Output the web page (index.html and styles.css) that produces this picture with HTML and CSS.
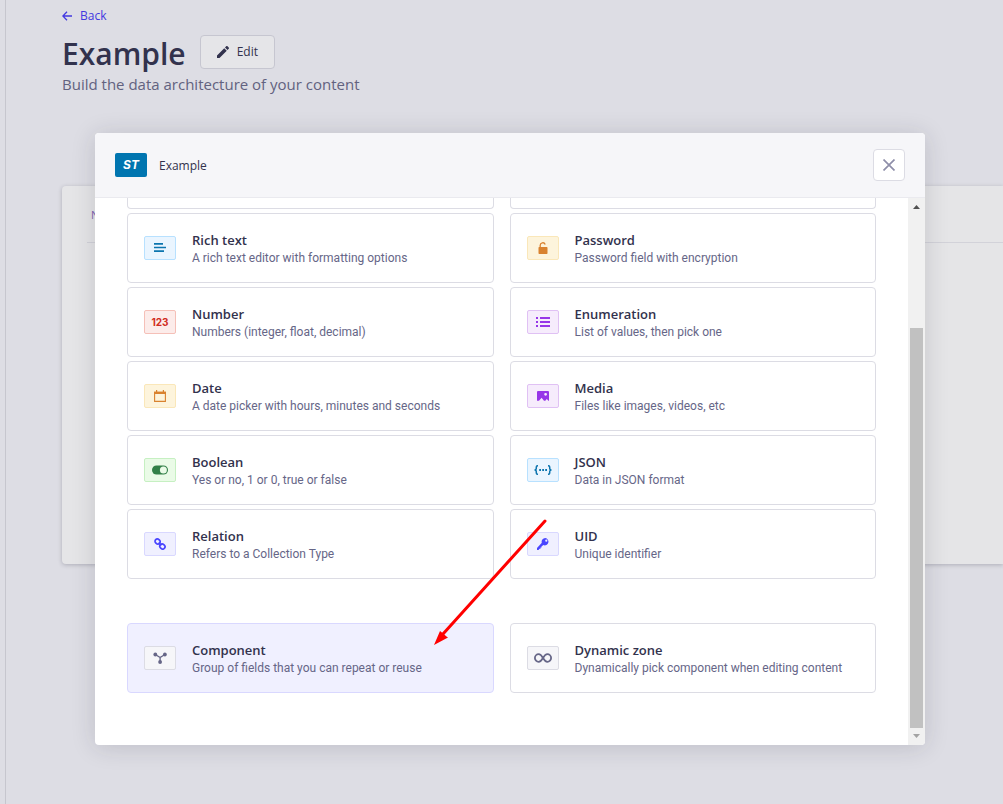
FILE: index.html
```html
<!DOCTYPE html>
<html lang="en">
<head>
<meta charset="utf-8">
<meta name="viewport" content="width=device-width, initial-scale=1">
<title>Content-Type Builder</title>
<link rel="stylesheet" href="styles.css">
</head>
<body>
<div class="page">
  <div class="side-edge"></div>
  <main class="content">
    <a class="back" href="#">
      <svg width="10" height="10" viewBox="0 0 10 10" fill="none" stroke="currentColor" stroke-width="1.3"><path d="M10 5H1M5 .7.8 5 5 9.300"/></svg>
      Back
    </a>
    <div class="title-row">
      <h1 class="title">Example</h1>
      <button class="edit" type="button">
        <svg width="12" height="12" viewBox="0 0 24 24" fill="currentColor"><path d="M0 19v5h5L19.500 9.500l-5-5zM23.400 5.600c.8-.8.8-1.800 0-2.600L21 .6c-.8-.8-1.800-.8-2.600 0L16 3l5 5z"/></svg>
        Edit
      </button>
    </div>
    <p class="subtitle">Build the data architecture of your content</p>
    <section class="panel">
      <div class="panel-head">N</div>
    </section>
  </main>
</div>

<div class="overlay">
  <div class="modal" role="dialog" aria-modal="true" aria-labelledby="dialog-title">
    <header class="modal-head">
      <span class="badge">ST</span>
      <h2 class="modal-title" id="dialog-title">Example</h2>
      <button class="close" type="button" aria-label="Close">
        <svg width="12" height="12" viewBox="0 0 12 12" fill="none" stroke="currentColor" stroke-width="1.700"><path d="M.5.5l11 11M11.500.5l-11 11"/></svg>
      </button>
    </header>
    <div class="modal-body">
      <div class="fields">
        <div class="grid">
          <div class="card-end"></div>
          <div class="card-end"></div>
          <button class="card" type="button">
            <span class="icon blue"><svg width="12" height="10" viewBox="0 0 12 10" fill="currentColor"><path d="M0 0h9v1.700H0zM0 3.700h12v1.600H0zM0 7.200h10v1.800H0z"/></svg></span>
            <span class="text"><span class="name">Rich text</span><span class="desc">A rich text editor with formatting options</span></span>
          </button>
          <button class="card" type="button">
            <span class="icon amber"><svg width="10" height="12" viewBox="0 0 10 12"><path d="M2.200 5V3.300a2.600 2.600 0 0 1 5-.9" fill="none" stroke="currentColor" stroke-width="1.300"/><rect x=".5" y="5" width="9" height="7" rx=".8" fill="currentColor"/></svg></span>
            <span class="text"><span class="name">Password</span><span class="desc">Password field with encryption</span></span>
          </button>
          <button class="card" type="button">
            <span class="icon red digits">123</span>
            <span class="text"><span class="name">Number</span><span class="desc">Numbers (integer, float, decimal)</span></span>
          </button>
          <button class="card" type="button">
            <span class="icon purple"><svg width="14" height="12" viewBox="0 0 14 12" fill="currentColor"><path d="M0 1h2v2H0zM4 1h10v2H4zM0 5h2v2H0zM4 5h10v2H4zM0 9h2v2H0zM4 9h10v2H4z"/></svg></span>
            <span class="text"><span class="name">Enumeration</span><span class="desc">List of values, then pick one</span></span>
          </button>
          <button class="card" type="button">
            <span class="icon amber"><svg width="12" height="12" viewBox="0 0 12 12"><path d="M.6 2.300h10.800v9.100H.6z" fill="none" stroke="currentColor" stroke-width="1.100"/><path d="M0 1.700h12V4H0zM2 0h1.200v2H2zM8.800 0H10v2H8.800z" fill="currentColor"/></svg></span>
            <span class="text"><span class="name">Date</span><span class="desc">A date picker with hours, minutes and seconds</span></span>
          </button>
          <button class="card" type="button">
            <span class="icon purple"><svg width="12" height="12" viewBox="0 0 12 12" fill="currentColor"><path fill-rule="evenodd" d="M1.200 1h9.600c.7 0 1.200.5 1.200 1.200v8.600h-.6L9.800 9 8.300 10.800H7L4.600 7.800 2 10.800H0V2.200C0 1.500.5 1 1.200 1zm7.400 1.900a1.400 1.400 0 1 0 0 2.800 1.400 1.400 0 0 0 0-2.800z"/></svg></span>
            <span class="text"><span class="name">Media</span><span class="desc">Files like images, videos, etc</span></span>
          </button>
          <button class="card" type="button">
            <span class="icon green"><svg width="16" height="10" viewBox="0 0 16 10"><rect y=".5" width="16" height="9" rx="4.500" fill="currentColor"/><circle cx="11.400" cy="5" r="3.500" fill="#eafbe7"/></svg></span>
            <span class="text"><span class="name">Boolean</span><span class="desc">Yes or no, 1 or 0, true or false</span></span>
          </button>
          <button class="card" type="button">
            <span class="icon blue"><svg width="18" height="10" viewBox="0 0 18 10" fill="none" stroke="currentColor" stroke-width="1.500"><path d="M4 .8H3.500C2.500.8 2.300 1.300 2.300 2v1.300C2.300 4.300 1.700 5 .5 5c1.200 0 1.800.7 1.800 1.700V8c0 .7.2 1.200 1.200 1.200H4M14 .8h.5c1 0 1.200.5 1.200 1.200v1.300c0 1 .6 1.700 1.800 1.700-1.200 0-1.800.7-1.800 1.700V8c0 .7-.2 1.200-1.200 1.200H14"/><path d="M5.200 5h1.800M8.200 5H10M11.200 5H13" stroke-width="2"/></svg></span>
            <span class="text"><span class="name">JSON</span><span class="desc">Data in JSON format</span></span>
          </button>
          <button class="card" type="button">
            <span class="icon indigo"><svg width="12" height="12" viewBox="0 0 12 12" fill="none" stroke="currentColor" stroke-width="1.700"><rect x=".9" y="1.200" width="5.400" height="4.600" rx="2.300" transform="rotate(45 3.600 3.500)"/><rect x="5.700" y="6.200" width="5.400" height="4.600" rx="2.300" transform="rotate(45 8.400 8.500)"/><path d="M4.600 4.600l2.800 2.800"/></svg></span>
            <span class="text"><span class="name">Relation</span><span class="desc">Refers to a Collection Type</span></span>
          </button>
          <button class="card" type="button">
            <span class="icon indigo"><svg width="12" height="12" viewBox="0 0 12 12" fill="currentColor"><path fill-rule="evenodd" d="M8.300 0a3.700 3.700 0 0 0-3.500 4.800L0 10v2h1.500l1-1.200h1V9.600h1V8.500l1.900-1.400A3.700 3.700 0 1 0 8.300 0zm1 1.600a1.100 1.100 0 1 1 0 2.200 1.100 1.100 0 0 1 0-2.200z"/></svg></span>
            <span class="text"><span class="name">UID</span><span class="desc">Unique identifier</span></span>
          </button>
        </div>
        <div class="grid">
          <button class="card selected" type="button">
            <span class="icon gray"><svg width="14" height="12" viewBox="0 0 14 12" fill="currentColor"><circle cx="2.300" cy="2.500" r="1.900"/><circle cx="11.900" cy="2.500" r="1.900"/><circle cx="7.100" cy="10" r="1.900"/><path d="M2.300 2.500l4.800 3 4.800-3M7.100 5v5" fill="none" stroke="currentColor" stroke-width="1.400"/></svg></span>
            <span class="text"><span class="name">Component</span><span class="desc">Group of fields that you can repeat or reuse</span></span>
          </button>
          <button class="card" type="button">
            <span class="icon gray"><svg width="18" height="10" viewBox="0 0 18 10" fill="none" stroke="currentColor" stroke-width="1.800"><path d="M9 5C7.500 2.500 6.500 1.200 4.700 1.200a3.800 3.800 0 0 0 0 7.600C6.500 8.800 7.500 7.500 9 5s2.500-3.800 4.300-3.800a3.800 3.800 0 0 1 0 7.600C11.500 8.800 10.500 7.500 9 5z"/></svg></span>
            <span class="text"><span class="name">Dynamic zone</span><span class="desc">Dynamically pick component when editing content</span></span>
          </button>
        </div>
        <svg class="pointer" width="114" height="128" viewBox="0 0 114 128" aria-hidden="true"><path d="M112 2L10 115" stroke="#f00" stroke-width="3" stroke-linecap="round"/><path d="M1 126l6-14 2.500 2 4 3.500 1.500 1z" fill="#f00"/></svg>
      </div>
      <div class="scrollbar" aria-hidden="true">
        <svg width="17" height="17" viewBox="0 0 17 17"><path d="M5 11h7L8.500 7z" fill="#505050"/></svg>
        <div class="track"><div class="thumb"></div></div>
        <svg width="17" height="17" viewBox="0 0 17 17"><path d="M5 6h7l-3.500 4z" fill="#a3a3a3"/></svg>
      </div>
    </div>
  </div>
</div>
</body>
</html>
```
FILE: styles.css
```css
* { box-sizing: border-box; }

body {
  margin: 0;
  background: #dddde4;
  color: #32324d;
  font-family: "Open Sans", "Noto Sans", sans-serif;
  font-size: 12px;
  line-height: 16px;
}

h1, h2, p { margin: 0; }
svg { display: block; flex: none; }
button { font: inherit; color: inherit; cursor: pointer; }

.page { display: flex; height: 100vh; overflow: hidden; }
.side-edge { flex: none; width: 6px; border-right: 1px solid #c6c6ce; }
.content { flex: 1; min-width: 0; padding: 8px 0 0 56px; }

.back {
  display: flex;
  align-items: center;
  gap: 8px;
  width: fit-content;
  color: #4338e0;
  text-decoration: none;
}

.title-row { display: flex; align-items: center; gap: 14px; margin-top: 6px; }
.title { padding-top: 4px; font-size: 30px; line-height: 40px; font-weight: 600; }
.edit {
  display: flex;
  align-items: center;
  gap: 8px;
  height: 34px;
  padding: 0 16px;
  border: 1px solid #c6c6d0;
  border-radius: 4px;
  background: #e5e5e8;
}
.subtitle { font-size: 15px; line-height: 20px; color: #62627f; }

.panel {
  height: 378px;
  margin-top: 92px;
  padding-left: 25px;
  border-radius: 4px 0 0 4px;
  background: #e5e5e7;
  box-shadow: 0 1px 4px rgba(33, 33, 52, 0.25);
}
.panel-head {
  height: 57px;
  padding: 21px 4px 0;
  border-bottom: 1px solid #d2d2d9;
  color: #7d5fb0;
  font-size: 11px;
}

.overlay {
  position: absolute;
  inset: 0;
  display: flex;
  padding: 133px 78px 59px 95px;
}
.modal {
  flex: 1;
  min-width: 0;
  display: flex;
  flex-direction: column;
  overflow: hidden;
  border-radius: 4px;
  background: #fff;
  box-shadow: 0 2px 24px rgba(33, 33, 52, 0.16);
}
.modal-head {
  display: flex;
  align-items: center;
  gap: 12px;
  padding: 16px 20px;
  border-bottom: 1px solid #eaeaef;
  background: #f6f6f9;
}
.badge {
  width: 32px;
  border-radius: 2px;
  background: #0075b0;
  color: #fff;
  font: italic 700 12px/24px Inter, sans-serif;
  text-align: center;
}
.modal-title { flex: 1; padding-top: 2px; font-size: 12px; font-weight: 500; }
.close {
  display: grid;
  place-items: center;
  width: 32px;
  height: 32px;
  padding: 0;
  border: 1px solid #dcdce4;
  border-radius: 4px;
  background: #fff;
  color: #8e8ea9;
}

.modal-body { flex: 1; min-height: 0; display: flex; }
.fields {
  position: relative;
  flex: 1;
  min-width: 0;
  display: flex;
  flex-direction: column;
  justify-content: flex-end;
  gap: 44px;
  padding: 0 32px 52px;
  overflow: hidden;
}
.grid {
  display: grid;
  grid-template-columns: 1fr 1fr;
  gap: 4px 16px;
}
.card, .card-end {
  border: 1px solid #dcdce4;
  border-radius: 4px;
  background: #fff;
}
.card-end { height: 11px; border-top: 0; border-radius: 0 0 4px 4px; }
.card {
  display: flex;
  align-items: center;
  gap: 16px;
  padding: 16px;
  text-align: left;
}
.selected { border-color: #d9d8ff; background: #f0f0ff; }
.text { display: flex; flex-direction: column; min-width: 0; }
.name { font-size: 13px; line-height: 20px; font-weight: 600; }
.desc { color: #666687; font-family: Roboto, "Open Sans", sans-serif; }

.icon {
  flex: none;
  display: grid;
  place-items: center;
  width: 32px;
  height: 24px;
  border: 1px solid;
  border-radius: 2px;
}
.icon.blue { background: #eaf5ff; border-color: #b8e1ff; color: #0c75af; }
.icon.amber { background: #fdf4dc; border-color: #fae7b9; color: #d9822f; }
.icon.red { background: #fcecea; border-color: #f5c0b8; color: #d02b20; }
.icon.purple { background: #f6ecfc; border-color: #e0c1f4; color: #9736e8; }
.icon.green { background: #eafbe7; border-color: #c6f0c2; color: #328048; }
.icon.indigo { background: #f0f0ff; border-color: #d9d8ff; color: #4945ff; }
.icon.gray { background: #f6f6f9; border-color: #dcdce4; color: #666687; }
.digits { font: 700 10px/22px Inter, sans-serif; }

.pointer { position: absolute; right: 361px; bottom: 98px; }

.scrollbar {
  flex: none;
  display: flex;
  flex-direction: column;
  width: 17px;
  background: #f1f1f1;
}
.track {
  flex: 1;
  display: flex;
  flex-direction: column;
  justify-content: flex-end;
  padding: 0 2px;
}
.thumb { height: 78%; background: #c1c1c1; }
```
